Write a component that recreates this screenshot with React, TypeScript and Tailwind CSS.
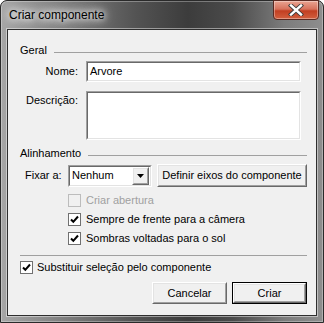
import React from 'react';

const font = { fontFamily: '"Liberation Sans", Arial, sans-serif' };

const Sunken: React.FC<{ className?: string; children?: React.ReactNode }> = ({ className = '', children }) => (
  <div className={`border border-t-[#a0a0a0] border-l-[#a0a0a0] border-b-white border-r-white ${className}`}>
    <div className="h-full w-full border border-t-[#696969] border-l-[#696969] border-b-[#e3e3e3] border-r-[#e3e3e3] bg-white">
      {children}
    </div>
  </div>
);

const Raised: React.FC<{ className?: string; children?: React.ReactNode; def?: boolean }> = ({ className = '', children, def }) => (
  <div className={`${def ? 'border border-black' : ''} ${className}`}>
    <div className="h-full w-full border border-t-white border-l-white border-b-[#696969] border-r-[#696969]">
      <div className="h-full w-full border border-t-[#e3e3e3] border-l-[#e3e3e3] border-b-[#a0a0a0] border-r-[#a0a0a0] bg-[#f0f0f0] flex items-center justify-center text-black">
        {children}
      </div>
    </div>
  </div>
);

const Check: React.FC<{ checked?: boolean; disabled?: boolean }> = ({ checked, disabled }) => (
  <div
    className={`w-[13px] h-[13px] border flex items-center justify-center ${
      disabled ? 'border-[#bcbcbc] bg-[#f0f0f0]' : 'border-[#707070] bg-white'
    }`}
  >
    {checked && (
      <svg width="9" height="9" viewBox="0 0 9 9">
        <path d="M1 4.5 L3.3 6.8 L8 1.5" stroke="#000" strokeWidth="2" fill="none" />
      </svg>
    )}
  </div>
);

const GroupHeader: React.FC<{ label: string }> = ({ label }) => (
  <div className="flex items-center h-[14px] gap-[7px]">
    <span className="text-black leading-none">{label}</span>
    <div className="flex-1 mt-[4px] h-px bg-[#a0a0a0]" />
  </div>
);

export default function App() {
  return (
    <div className="w-[324px] h-[323px] overflow-hidden bg-white" style={font}>
      <div className="w-[324px] h-[323px] rounded-t-[7px] border border-[#2a2a2a] bg-[#474747] shadow-[inset_0_0_0_1px_rgba(255,255,255,0.3)] flex flex-col bg-[linear-gradient(to_right,#a6a6a6_0%,#7e7e7e_20%,#535353_42%,#3c3c3c_58%,#4b4b4b_72%,#7c7c7c_88%,#8e8e8e_100%)]">
        <div className="h-[28px] flex items-start justify-between pr-[4px]">
          <span className="mt-[8px] ml-[8px] text-[12px] text-black leading-none [text-shadow:0_0_6px_#fff,0_0_10px_#fff,0_0_14px_#fff]">
            Criar componente
          </span>
          <div className="-mt-px w-[46px] h-[20px] rounded-b-[4px] border border-[#5a2a22] bg-[linear-gradient(to_bottom,#e9a492_0%,#d7725c_45%,#c23f22_55%,#d2603f_100%)] shadow-[inset_0_0_0_1px_rgba(255,255,255,0.35)] flex items-center justify-center">
            <svg width="16" height="12" viewBox="0 0 16 12">
              <path d="M3 1.5 L13 10.5 M13 1.5 L3 10.5" stroke="#3b3b3b" strokeWidth="4.2" strokeLinecap="square" />
              <path d="M3 1.5 L13 10.5 M13 1.5 L3 10.5" stroke="#fff" strokeWidth="2.4" strokeLinecap="square" />
            </svg>
          </div>
        </div>
        <div className="mx-[6px] border border-[#2e2e2e] shadow-[0_0_0_1px_rgba(255,255,255,0.45)] bg-[#f0f0f0] h-[287px] pl-[12px] pr-[9px] text-[11px] text-black">
          <div className="mt-[13px]">
            <GroupHeader label="Geral" />
          </div>
          <div className="mt-[4px] flex items-center">
            <div className="w-[58px] text-right">Nome:</div>
            <Sunken className="ml-[8px] w-[215px] h-[21px]">
              <div className="pl-[2px] pt-[3px] leading-none">Arvore</div>
            </Sunken>
          </div>
          <div className="mt-[9px] flex items-start">
            <div className="w-[58px] text-right pt-[1px]">Descrição:</div>
            <Sunken className="ml-[8px] w-[215px] h-[49px]" />
          </div>
          <div className="mt-[6px]">
            <GroupHeader label="Alinhamento" />
          </div>
          <div className="mt-[4px] flex items-center h-[23px]">
            <div className="ml-[5px] w-[43px]">Fixar a:</div>
            <Sunken className="w-[84px] h-[22px]">
              <div className="flex h-full items-center">
                <span className="flex-1 pl-[2px]">Nenhum</span>
                <Raised className="w-[17px] h-[18px] mr-px">
                  <svg width="7" height="4" viewBox="0 0 7 4">
                    <path d="M0 0 H7 L3.5 4 Z" fill="#000" />
                  </svg>
                </Raised>
              </div>
            </Sunken>
            <Raised className="ml-[5px] w-[150px] h-[23px]">Definir eixos do componente</Raised>
          </div>
          <div className="mt-[4px] pl-[48px]">
            <div className="h-[19px] flex items-center gap-[5px] text-[#a0a0a0]">
              <Check disabled />
              <span>Criar abertura</span>
            </div>
            <div className="h-[19px] flex items-center gap-[5px]">
              <Check checked />
              <span>Sempre de frente para a câmera</span>
            </div>
            <div className="h-[19px] flex items-center gap-[5px]">
              <Check checked />
              <span>Sombras voltadas para o sol</span>
            </div>
          </div>
          <div className="mt-[7px] h-px bg-[#a0a0a0]" />
          <div className="mt-[2px] h-[19px] flex items-center gap-[4px]">
            <Check checked />
            <span>Substituir seleção pelo componente</span>
          </div>
          <div className="mt-[5px] flex justify-end gap-[5px]">
            <Raised className="w-[75px] h-[22px]">Cancelar</Raised>
            <Raised def className="w-[75px] h-[22px]">Criar</Raised>
          </div>
        </div>
      </div>
    </div>
  );
}
